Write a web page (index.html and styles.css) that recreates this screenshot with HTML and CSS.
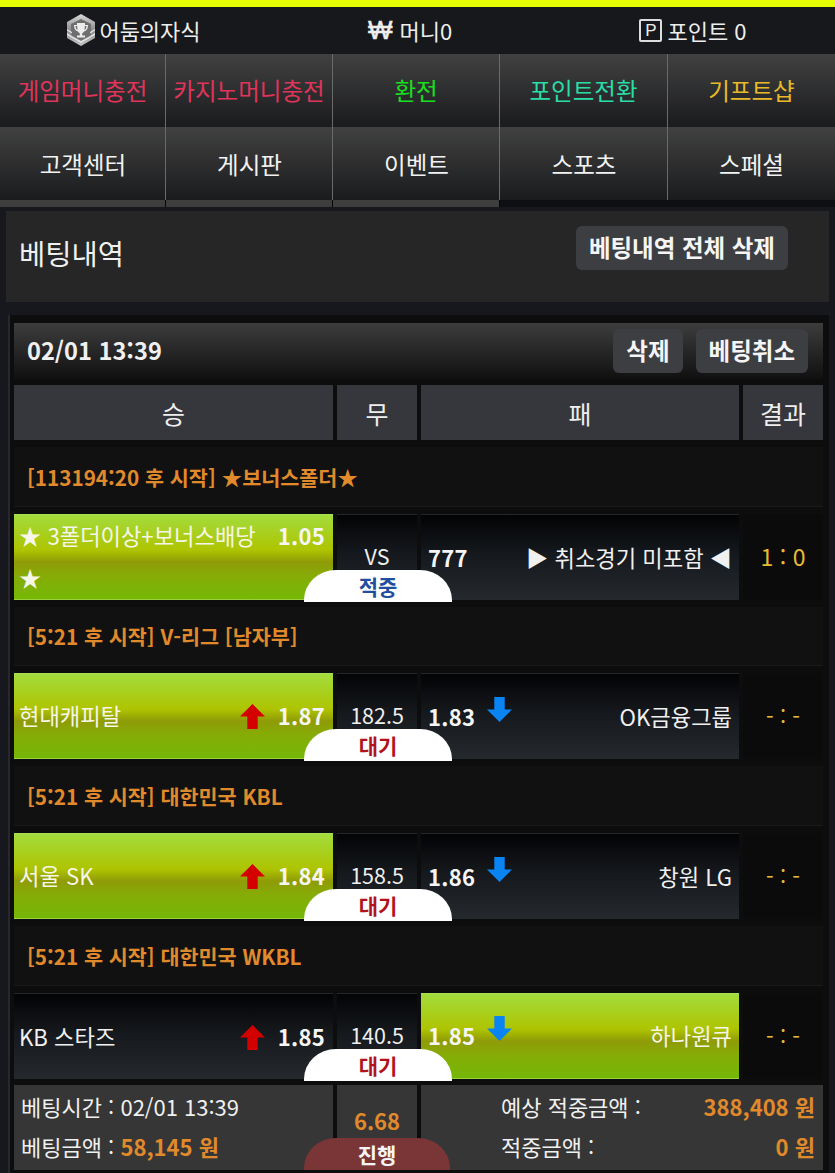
FILE: index.html
```html
<!DOCTYPE html>
<html lang="ko">
<head>
<meta charset="utf-8">
<title>베팅내역</title>
<link rel="stylesheet" href="styles.css">
</head>
<body>
<div class="topline"></div>
<header class="userbar">
  <div class="userbar-item">
    <svg class="rank" viewBox="0 0 30 32" aria-hidden="true">
      <defs><linearGradient id="hex" x1="0" y1="0" x2="0" y2="1"><stop offset="0" stop-color="#d8d8d8"/><stop offset=".5" stop-color="#8d8d8d"/><stop offset="1" stop-color="#c4c4c4"/></linearGradient></defs>
      <polygon points="15,0 29,8 29,24 15,32 1,24 1,8" fill="url(#hex)"/>
      <polygon points="15,5 25,10 25,21 15,27 5,21 5,10" fill="#6e6e6e"/>
      <path d="M8 11h3v-2h8v2h3c0 4-1.500 6-4 6.500-.6 1-1.300 1.500-1.800 1.800v2.200h2.800v2h-8v-2h2.800v-2.200c-.5-.3-1.200-.8-1.800-1.800C9.500 17 8 15 8 11zm1.500 1c.2 2 .9 3.400 2 4l-.4-4zm11 0h-1.600l-.4 4c1.100-.6 1.800-2 2-4z" fill="#ececec"/>
      <path d="M1 19l6 4 8 4 8-4 6-4v2l-14 8-14-8zM1 15l5 3v1.500l-5-3zM29 15l-5 3v1.500l5-3z" fill="#e4e4e4"/>
    </svg>
    <span>어둠의자식</span>
  </div>
  <div class="userbar-item wide-gap"><span class="won">₩</span><span>머니0</span></div>
  <div class="userbar-item"><span class="pbox">P</span><span>포인트 0</span></div>
</header>

<nav class="nav">
  <a class="nav-cell c-red">게임머니충전</a>
  <a class="nav-cell c-red">카지노머니충전</a>
  <a class="nav-cell c-green">환전</a>
  <a class="nav-cell c-teal">포인트전환</a>
  <a class="nav-cell c-gold">기프트샵</a>
  <a class="nav-cell tab on">고객센터</a>
  <a class="nav-cell tab on">게시판</a>
  <a class="nav-cell tab on">이벤트</a>
  <a class="nav-cell tab">스포츠</a>
  <a class="nav-cell tab last">스페셜</a>
</nav>

<section class="title-panel">
  <h1>베팅내역</h1>
  <button class="btn btn-all">베팅내역 전체 삭제</button>
</section>

<main class="card">
  <div class="card-head">
    <strong>02/01 13:39</strong>
    <div class="card-actions">
      <button class="btn">삭제</button>
      <button class="btn">베팅취소</button>
    </div>
  </div>

  <div class="grid heads">
    <div class="th">승</div><div class="th">무</div><div class="th">패</div><div class="th">결과</div>
  </div>

  <div class="league">[113194:20 후 시작] ★보너스폴더★</div>
  <div class="grid match">
    <div class="side green"><span class="name wrap">★ 3폴더이상+보너스배당 ★</span><b class="odd top">1.05</b></div>
    <div class="mid">VS<span class="badge b-hit">적중</span></div>
    <div class="side dark"><b class="odd">777</b><span class="name right">▶ 취소경기 미포함 ◀</span></div>
    <div class="res score">1 : 0</div>
  </div>

  <div class="league short">[5:21 후 시작] V-리그 [남자부]</div>
  <div class="grid match">
    <div class="side green"><span class="name">현대캐피탈</span><svg class="arrow up" viewBox="0 0 24 24"><path d="M12 0 24 12h-7v12H7V12H0z"/></svg><b class="odd">1.87</b></div>
    <div class="mid">182.5<span class="badge b-wait">대기</span></div>
    <div class="side dark"><b class="odd">1.83</b><svg class="arrow down" viewBox="0 0 24 24"><path d="M12 24 24 12h-7V0H7v12H0z"/></svg><span class="name right">OK금융그룹</span></div>
    <div class="res">- : -</div>
  </div>

  <div class="league">[5:21 후 시작] 대한민국 KBL</div>
  <div class="grid match">
    <div class="side green"><span class="name">서울 SK</span><svg class="arrow up" viewBox="0 0 24 24"><path d="M12 0 24 12h-7v12H7V12H0z"/></svg><b class="odd">1.84</b></div>
    <div class="mid">158.5<span class="badge b-wait">대기</span></div>
    <div class="side dark"><b class="odd">1.86</b><svg class="arrow down" viewBox="0 0 24 24"><path d="M12 24 24 12h-7V0H7v12H0z"/></svg><span class="name right">창원 LG</span></div>
    <div class="res">- : -</div>
  </div>

  <div class="league">[5:21 후 시작] 대한민국 WKBL</div>
  <div class="grid match">
    <div class="side dark"><span class="name">KB 스타즈</span><svg class="arrow up" viewBox="0 0 24 24"><path d="M12 0 24 12h-7v12H7V12H0z"/></svg><b class="odd">1.85</b></div>
    <div class="mid">140.5<span class="badge b-wait">대기</span></div>
    <div class="side green"><b class="odd">1.85</b><svg class="arrow down" viewBox="0 0 24 24"><path d="M12 24 24 12h-7V0H7v12H0z"/></svg><span class="name right">하나원큐</span></div>
    <div class="res">- : -</div>
  </div>

  <div class="grid summary">
    <div class="sum-left">
      <div>베팅시간 : 02/01 13:39</div>
      <div>베팅금액 : <b class="orange">58,145 원</b></div>
    </div>
    <div class="sum-mid"><b class="orange">6.68</b><span class="badge b-run">진행</span></div>
    <div class="sum-right">
      <div class="sum-row"><span>예상 적중금액 :</span><b class="orange">388,408 원</b></div>
      <div class="sum-row"><span>적중금액 :</span><b class="orange">0 원</b></div>
    </div>
  </div>
</main>
</body>
</html>
```

FILE: styles.css
```css
* { box-sizing: border-box; }
html, body { margin: 0; padding: 0; height: 1173px; overflow: hidden; }
body {
  background: #16181d;
  color: #f0f0f0;
  font-family: "Noto Sans CJK KR", "Noto Sans", "Liberation Sans", sans-serif;
}
.topline { height: 7px; background: #e6ff00; }

.userbar {
  height: 47px;
  display: grid;
  grid-template-columns: 267px 286px 280px;
  background: #17181c;
}
.userbar-item {
  display: flex;
  align-items: center;
  justify-content: center;
  gap: 3px;
  padding-bottom: 1px;
  font-size: 22px;
  line-height: 1;
  color: #eee;
}
.wide-gap { gap: 7px; }
.rank { width: 30px; height: 32px; }
.won {
  font-size: 26px;
  font-family: "Liberation Sans", sans-serif;
  font-weight: 400;
  -webkit-text-stroke: .5px #eee;
}
.pbox {
  width: 23px;
  height: 23px;
  border: 2px solid #ddd;
  border-radius: 2px;
  font-size: 17px;
  font-family: "Liberation Sans", sans-serif;
  display: flex;
  align-items: center;
  justify-content: center;
  margin-right: 2px;
}

.nav {
  display: grid;
  grid-template-columns: 166px 167px 167px 168px 167px;
  height: 153px;
  grid-template-rows: 73px 80px;
}
.nav-cell {
  display: flex;
  align-items: center;
  justify-content: center;
  padding-bottom: 2px;
  font-size: 23.500px;
  background: linear-gradient(#414141, #1a1b1d);
  border-right: 1px solid #6a6a6a;
  white-space: nowrap;
}
.nav-cell:nth-child(5) { border-right: 0; }
.tab {
  height: 80px;
  padding-bottom: 7px;
  color: #f2f2f2;
  border-right: 0;
  background:
    linear-gradient(#6a6a6a, #6a6a6a) right top / 1px 73px no-repeat,
    linear-gradient(#414141, #1a1b1d 73px, #0e0f12 73px);
}
.tab.on {
  background:
    linear-gradient(#6a6a6a, #6a6a6a) right top / 1px 73px no-repeat,
    linear-gradient(#060606, #060606) right bottom / 1px 7px no-repeat,
    linear-gradient(#414141, #1a1b1d 73px, #3e3e3e 73px);
}
.tab.last { background: linear-gradient(#414141, #1a1b1d 73px, #0e0f12 73px); }
.c-red { color: #e0345c; }
.c-green { color: #17e01f; }
.c-teal { color: #2adca6; }
.c-gold { color: #e9b92a; }

.title-panel {
  margin: 4px 0 0 6px;
  width: 823px;
  height: 91px;
  background: #262626;
  display: flex;
  align-items: center;
  justify-content: space-between;
  padding: 0 41px 0 13px;
}
.title-panel h1 { margin: -7px 0 0; font-size: 28.500px; font-weight: 400; line-height: 1; }
.btn {
  font-family: inherit;
  background: #3d3e42;
  color: #f5f5f5;
  border: 0;
  border-radius: 6px;
  font-size: 23.500px;
  font-weight: 700;
  height: 44px;
  padding: 0 13px;
  line-height: 1;
}
.btn-all { margin-top: -18px; }

.card {
  margin: 13px 0 0 8px;
  width: 821px;
  height: 900px;
  background: #0d0d0e;
  border-left: 2px solid #26282d;
  padding: 8px 6px 0 4px;
}
.card-head {
  height: 56px;
  background: linear-gradient(#3d3d3d, #101011);
  display: flex;
  align-items: center;
  justify-content: space-between;
  padding: 0 15px 0 13px;
  font-size: 23.600px;
}
.card-head strong { padding-bottom: 3px; }
.card-actions { display: flex; gap: 13px; }

.grid {
  display: grid;
  grid-template-columns: 319px 80px 318px 80px;
  column-gap: 4px;
}
.heads { margin-top: 6px; }
.th {
  height: 55px;
  background: #36373d;
  display: flex;
  align-items: center;
  justify-content: center;
  font-size: 25px;
  color: #eee;
}

.league {
  margin-top: 7px;
  height: 60px;
  background: #111112;
  border-bottom: 1px solid #1a1a1b;
  display: flex;
  align-items: center;
  padding: 0 0 0 13px;
  color: #e08a2c;
  font-size: 20.700px;
  font-weight: 700;
}
.league.short { height: 59px; }
.match { margin-top: 7px; height: 86px; }
.side {
  display: flex;
  align-items: center;
  padding: 0 7px 2px 5px;
  font-size: 22.200px;
  min-width: 0;
}
.green {
  background: linear-gradient(#a3dc3f 0%, #aec400 42%, #8f9b08 56%, #86ac06 72%, #74b806 100%);
  box-shadow: inset 0 -1px #9ad03a, inset 0 1px #a9df52;
  color: #f6f6e8;
}
.dark { background: linear-gradient(#020305 0%, #15181c 45%, #25292e 100%); border-top: 1px solid #24262b; }
.name { flex: 1; white-space: nowrap; min-width: 0; }
.name.wrap { white-space: normal; line-height: 42px; flex: 0 0 250px; }
.name.right { text-align: right; }
.odd { font-size: 22px; letter-spacing: .3px; font-weight: 700; color: #f5f5f5; white-space: nowrap; margin-right: 1px; }
.side > .odd:first-child { margin: 0 0 0 2px; }
.odd.top { align-self: flex-start; margin: 5px 1px 0 auto; }
.arrow { width: 25px; height: 25px; flex: none; }
.up { fill: #d40000; margin-right: 13px; margin-top: 3px; }
.down { fill: #0a84f2; margin: -13px 0 0 12px; }
.mid {
  position: relative;
  background: linear-gradient(#030406 0%, #15181c 45%, #25292e 100%);
  border-top: 1px solid #24262b;
  display: flex;
  align-items: center;
  justify-content: center;
  padding-bottom: 4px;
  font-size: 21.500px;
  color: #eee;
}
.res {
  background: #0b0b0c;
  display: flex;
  align-items: center;
  justify-content: center;
  color: #e8bb35;
  font-size: 22px;
  padding-bottom: 2px;
}
.score { font-size: 23px; padding-bottom: 3px; }
.badge {
  position: absolute;
  left: -33px;
  bottom: -2px;
  width: 148px;
  height: 32px;
  border-radius: 32px 32px 0 0 / 30px 30px 0 0;
  background: #fff;
  display: flex;
  align-items: center;
  justify-content: center;
  font-size: 21px;
  font-weight: 700;
  line-height: 1;
}
.b-hit { color: #1f4f9e; }
.b-wait { color: #b3121c; }
.b-run { background: #7a3636; color: #f5f5f5; bottom: 0; width: 146px; }

.summary { margin-top: 6px; height: 85px; }
.sum-left, .sum-mid, .sum-right { background: #363636; }
.sum-left { padding: 1px 0 0 7px; font-size: 22px; line-height: 40px; }
.sum-mid {
  position: relative;
  display: flex;
  justify-content: center;
  padding-top: 19px;
  font-size: 22px;
}
.sum-right { grid-column: 3 / 5; padding: 1px 8px 0 80px; font-size: 22px; line-height: 40px; }
.sum-row { display: flex; justify-content: space-between; }
.orange { color: #e08a2c; font-weight: 700; }
```
